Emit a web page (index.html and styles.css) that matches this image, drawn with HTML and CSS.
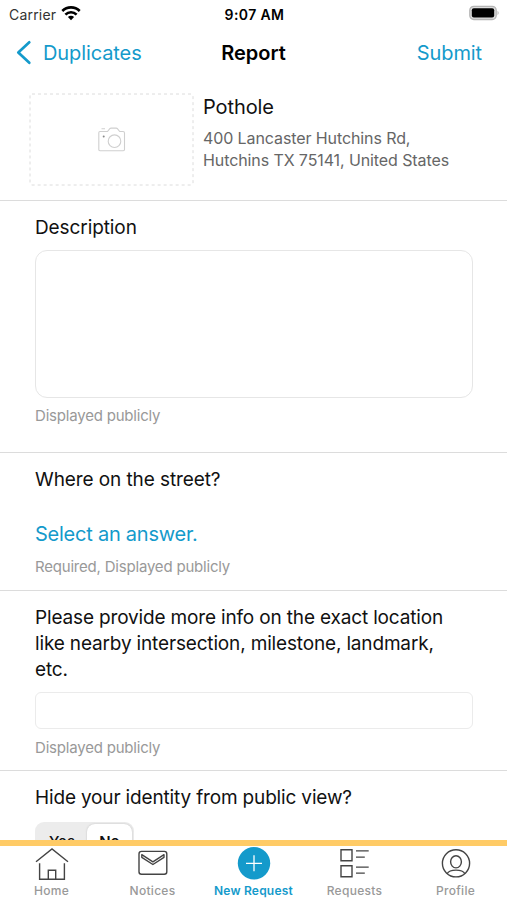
FILE: index.html
```html
<!DOCTYPE html>
<html lang="en">
<head>
<meta charset="utf-8">
<title>Report</title>
<link rel="stylesheet" href="styles.css">
</head>
<body>
<div class="app">
  <div class="status">
    <div class="carrier"><span>Carrier</span>
      <svg width="20" height="16" viewBox="0 0 20 16" fill="none" stroke="#000" stroke-width="2.6"><path d="M1.3 6a12.3 12.3 0 0 1 17.4 0M4.4 9.6a7.9 7.9 0 0 1 11.2 0"/><path d="M10 15.2 6.9 12a4.4 4.4 0 0 1 6.2 0z" fill="#000" stroke="none"/></svg>
    </div>
    <div class="time">9:07 AM</div>
    <svg class="battery" width="31" height="16" viewBox="0 0 31 16"><rect x=".8" y="1.3" width="26.4" height="13.2" rx="4" fill="#ddd" stroke="#b5b5b5" stroke-width="1.3"/><rect x="2.8" y="3.2" width="22.4" height="9.4" rx="2" fill="#000"/><path d="M28.6 5.8v4.4q2-2.2 0-4.4z" fill="#aaa"/></svg>
  </div>
  <header class="nav">
    <a class="back"><svg width="16" height="26" viewBox="0 0 16 26" fill="none" stroke="#149acb" stroke-width="2.7" stroke-linecap="round" stroke-linejoin="round"><path d="M13.3 2.3 2.3 12.5l11 10.3"/></svg><span>Duplicates</span></a>
    <h1>Report</h1>
    <a class="submit">Submit</a>
  </header>
  <main>
    <section class="summary">
      <div class="photo">
        <svg class="dash" width="165" height="93" fill="none" stroke="#dcdcdc"><rect x="1" y="1" width="163" height="91" rx="2" stroke-dasharray="3 3"/></svg>
        <svg width="28" height="26" viewBox="0 0 28 26" fill="none" stroke="#cfcfcf" stroke-width="1.1"><path d="M2 4.5h7.5l2.3-2.8q.5-.6 1.3-.6h5q.8 0 1.3.6l2.3 2.8H25q1.5 0 1.5 1.5v16.5q0 1.2-1.2 1.2H2q-1.2 0-1.2-1.2V5.7Q.8 4.5 2 4.5zM3.5 1.7H7"/><circle cx="16.5" cy="14.2" r="6.3"/><circle cx="5.7" cy="9.5" r="1" fill="#888" stroke="none"/></svg>
      </div>
      <div class="place">
        <h2>Pothole</h2>
        <p>400 Lancaster Hutchins Rd,<br>Hutchins TX 75141, United States</p>
      </div>
    </section>
    <section class="description">
      <h3>Description</h3>
      <div class="field area"></div>
      <p class="hint">Displayed publicly</p>
    </section>
    <section class="street">
      <h3>Where on the street?</h3>
      <a class="select">Select an answer.</a>
      <p class="hint">Required, Displayed publicly</p>
    </section>
    <section class="details">
      <h3>Please provide more info on the exact location<br>like nearby intersection, milestone, landmark,<br>etc.</h3>
      <div class="field line"></div>
      <p class="hint">Displayed publicly</p>
    </section>
    <section class="identity">
      <h3>Hide your identity from public view?</h3>
      <div class="segment"><span>Yes</span><span class="on">No</span></div>
    </section>
  </main>
  <nav class="tabs">
    <a><svg width="36" height="34" viewBox="0 0 36 34" fill="none" stroke="#444" stroke-width="1.4"><path d="M2 15.8 18 3l16 12.8M5.6 17.3v15.9h24.8V17.3M14.3 33.2v-9h7.4v9"/></svg><span>Home</span></a>
    <a><svg width="36" height="34" viewBox="0 0 36 34" fill="none" stroke="#444" stroke-width="1.4"><rect x="4" y="5.4" width="27.8" height="22.8" rx="2.5"/><path d="M6.8 8.7v2.6l11.1 7.2L29 11.3V8.7l-11.1 7.1z" stroke-linejoin="round"/></svg><span>Notices</span></a>
    <a class="active"><svg width="36" height="34" viewBox="0 0 36 34"><circle cx="18" cy="17.3" r="16.2" fill="#149acb"/><path d="M18 9.3v16M10 17.3h16" stroke="#fff" stroke-width="1.3"/></svg><span>New Request</span></a>
    <a><svg width="36" height="34" viewBox="0 0 36 34" fill="none" stroke="#444" stroke-width="1.4"><path d="M4 3.8h11v11H4zM4 19.8h11v11H4zM19 4.9h12.7M19 11.1h8.8M19 21.1h12.7M19 27.1h8.8"/></svg><span>Requests</span></a>
    <a><svg width="36" height="34" viewBox="0 0 36 34" fill="none" stroke="#444" stroke-width="1.4"><circle cx="18" cy="17.3" r="13.6"/><ellipse cx="18" cy="15.8" rx="5.4" ry="6.1"/><path d="M9.2 27.6q1.8-3.5 8.8-3.5t8.8 3.5"/></svg><span>Profile</span></a>
  </nav>
</div>
</body>
</html>
```
FILE: styles.css
```css
* { box-sizing: border-box; margin: 0; padding: 0; }
body { background: #fff; color: #111; font-family: Inter, "Liberation Sans", sans-serif; }
svg { display: block; flex: none; }
.app { width: 507px; height: 900px; display: flex; flex-direction: column; overflow: hidden; }
.status { height: 28px; display: grid; grid-template-columns: 1fr auto 1fr; align-items: center; padding: 0 7px 0 9px; color: #000; font-size: 14px; }
.carrier { display: flex; gap: 5px; align-items: center; color: #333; letter-spacing: .2px; }
.carrier svg { margin-top: -3px; }
.time { font-weight: 600; letter-spacing: .4px; }
.battery { justify-self: end; margin-top: -2px; }
.nav { height: 50px; display: grid; grid-template-columns: 1fr auto 1fr; align-items: center; padding: 0 25px 0 25px; font-size: 20px; letter-spacing: -.1px; color: #149acb; }
.back { display: flex; gap: 11px; align-items: center; margin-left: -9px; }
.nav h1 { font-size: 20px; font-weight: 600; letter-spacing: 0; color: #000; }
.submit { justify-self: end; }
main { flex: 1; min-height: 0; overflow: hidden; }
section { border-bottom: 1px solid #dcdcdc; padding-left: 35px; padding-right: 34px; }
.summary { height: 123px; display: flex; gap: 9px; padding: 15px 29px; }
.photo { position: relative; width: 165px; height: 93px; display: flex; align-items: center; justify-content: center; }
.dash { position: absolute; inset: 0; }
h2 { font-size: 20px; font-weight: 400; line-height: 28px; letter-spacing: -.1px; }
.place p { margin-top: 6px; font-size: 16px; line-height: 22px; letter-spacing: -.1px; color: #666; }
h3 { font-size: 19px; font-weight: 400; line-height: 26px; letter-spacing: -.16px; white-space: nowrap; }
.field { border: 1px solid #e6e6e6; }
.description { height: 252px; padding-top: 14px; }
.description h3, .street h3 { letter-spacing: -.09px; }
.area { height: 148px; margin-top: 9px; border-radius: 12px; }
.hint { font-size: 15px; line-height: 20px; letter-spacing: -.2px; color: #999; }
.description .hint { margin-top: 8px; }
.street { height: 138px; padding-top: 14px; }
.select { display: block; margin-top: 27px; font-size: 20px; line-height: 28px; letter-spacing: -.24px; color: #149acb; }
.street .hint { margin-top: 9px; }
.details { height: 180px; padding-top: 14px; }
.line { height: 37px; margin-top: 9px; border-radius: 6px; border-color: #ebebeb; }
.details .hint { margin-top: 9px; }
.identity { padding-top: 14px; border: 0; }
.segment { display: grid; grid-template-columns: 50px 45px; width: 99px; height: 40px; margin-top: 11px; padding: 2px; border-radius: 9px; background: #ececec; font-size: 15px; font-weight: 500; line-height: 36px; text-align: center; }
.on { background: #fff; border-radius: 8px; box-shadow: 0 0 2px #bbb; font-weight: 600; }
.tabs { height: 60px; border-top: 6px solid #ffcb66; display: grid; grid-template-columns: repeat(5, 101px); justify-content: center; background: #fff; color: #999; font-size: 12px; }
.tabs a { display: flex; flex-direction: column; align-items: center; line-height: 16px; font-weight: 500; letter-spacing: .3px; white-space: nowrap; }
.tabs span { margin-top: 3px; }
.tabs .active { color: #149acb; font-weight: 600; letter-spacing: .2px; }
```
